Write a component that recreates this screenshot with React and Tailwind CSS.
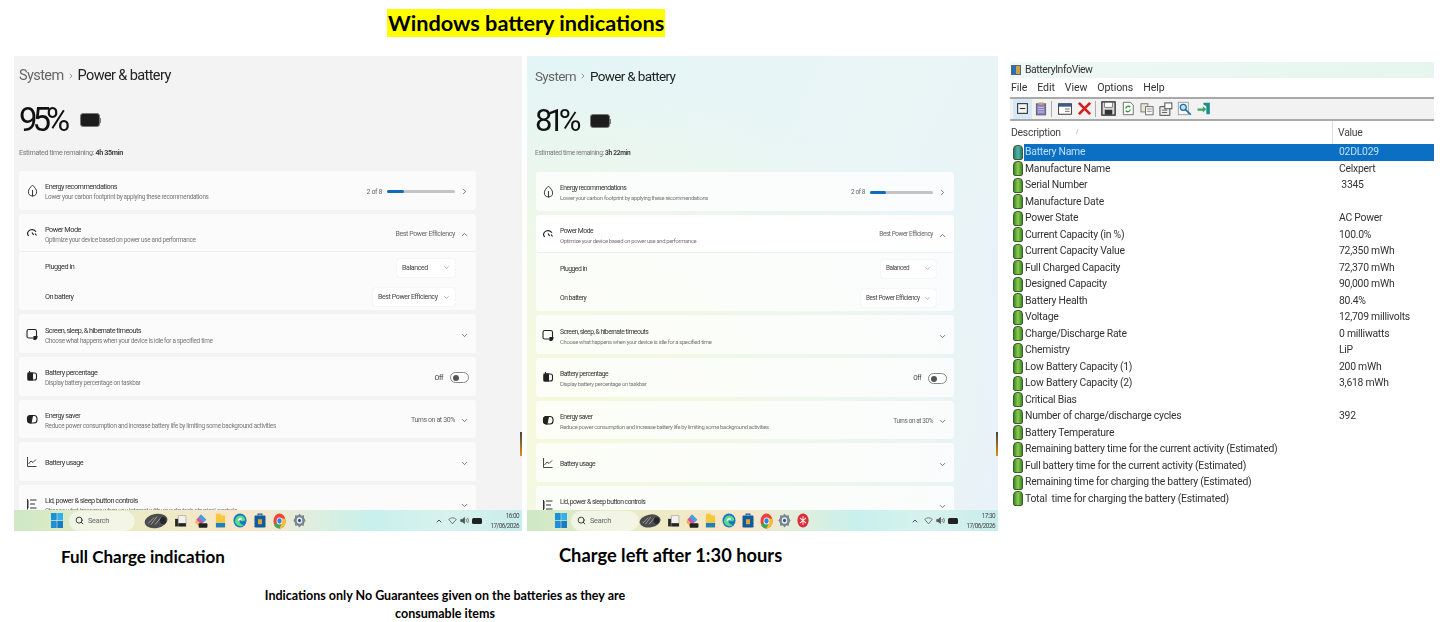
import { ChevronDown, ChevronRight, ChevronUp, Search } from "lucide-react";

const themes = {
  full: {
    panel: "w-[508px] bg-[#f3f3f3]",
    pad: "pl-[5px]",
    list: "w-[457px]",
    card: "bg-[#fbfbfb]",
    crumbs: "text-[14.5px] tracking-[-0.6px] translate-y-[1px]",
    big: "text-[33px] tracking-[-5px]",
    bigGap: "gap-[15px]",
    est: "text-[7.2px] tracking-[-0.35px]",
    slot: "w-[26px]",
    title: "text-[7.3px] tracking-[-0.5px]",
    sub: "text-[6.4px] tracking-[-0.32px]",
    side: "text-[7px] tracking-[-0.38px]",
    bar: "w-[68px]",
    barFill: "w-[17px]",
    taskLeft: "pl-[37px]",
    search: "w-[66px] ml-[6px]",
    rock: "ml-[9px] w-[24px]",
  },
  left: {
    panel: "w-[471px] bg-[radial-gradient(ellipse_at_0%_75%,#f7f9dc_0%,#eff8e8_35%,transparent_70%),linear-gradient(115deg,#e3f5f6_0%,#eaf5f6_55%,#e8f2f8_100%)]",
    pad: "pl-[8px]",
    list: "w-[418px] ml-[1px]",
    card: "bg-white/75",
    crumbs: "text-[13.5px] tracking-[-0.65px]",
    big: "text-[31px] tracking-[-5.5px]",
    bigGap: "gap-[14px]",
    est: "text-[6.6px] tracking-[-0.32px]",
    slot: "w-[24px]",
    title: "text-[6.8px] tracking-[-0.5px]",
    sub: "text-[5.9px] tracking-[-0.34px]",
    side: "text-[6.4px] tracking-[-0.38px]",
    bar: "w-[63px]",
    barFill: "w-[16px]",
    taskLeft: "pl-[28px]",
    search: "w-[68px] ml-[4px]",
    rock: "w-[22px]",
  },
};

function LeafIcon() {
  return (
    <svg viewBox="0 0 12 12" className="w-[13px] h-[13px] text-[#333]" fill="none" stroke="currentColor" strokeWidth="0.9">
      <path d="M6 1 C8 3 9.8 5 9.8 7.2 A3.8 3.8 0 0 1 2.2 7.2 C2.2 5 4 3 6 1Z" />
      <path d="M6 5.5 V11.5" />
    </svg>
  );
}

function GaugeIcon() {
  return (
    <svg viewBox="0 0 12 12" className="w-[12px] h-[12px] text-[#222]" fill="none" stroke="currentColor" strokeWidth="1.2">
      <path d="M1.5 7 A4.6 4.6 0 0 1 10 4.8" />
      <path d="M2.6 9 L1.5 7 M9 6.5 L10.5 8.5" />
      <path d="M6 5.5 L7.6 8" />
    </svg>
  );
}

function ScreenIcon() {
  return (
    <svg viewBox="0 0 12 12" className="w-[12px] h-[12px] text-[#222]" fill="none" stroke="currentColor" strokeWidth="1.1">
      <rect x="1" y="1.5" width="9.5" height="8.5" rx="1.8" />
      <path d="M8 11.5 A3 3 0 0 0 11 8.5 L8 8.5Z" fill="currentColor" />
    </svg>
  );
}

function PercentIcon() {
  return (
    <svg viewBox="0 0 12 12" className="w-[12px] h-[12px] text-[#222]" fill="none" stroke="currentColor" strokeWidth="1.1">
      <rect x="2" y="3" width="8.5" height="7" rx="2" />
      <path d="M2 3 H6.5 V10 H2Z" fill="currentColor" />
      <path d="M3.5 1 V3" />
    </svg>
  );
}

function SaverIcon() {
  return (
    <svg viewBox="0 0 12 12" className="w-[12px] h-[12px] text-[#222]" fill="none" stroke="currentColor" strokeWidth="1.1">
      <rect x="1.5" y="2.5" width="9.5" height="7.5" rx="3" />
      <path d="M1.5 6 A3.5 3.5 0 0 1 5 2.5 L6.5 2.5 L5 10 A3.5 3.5 0 0 1 1.5 6Z" fill="currentColor" />
    </svg>
  );
}

function ChartIcon() {
  return (
    <svg viewBox="0 0 12 12" className="w-[12px] h-[12px] text-[#333]" fill="none" stroke="currentColor" strokeWidth="0.9">
      <path d="M1.5 1 V10.5 H10.5" />
      <path d="M2.5 8 L5 5 L7 6.5 L10 3.5" />
    </svg>
  );
}

function ListIcon() {
  return (
    <svg viewBox="0 0 12 12" className="w-[12px] h-[12px] text-[#333]" fill="none" stroke="currentColor" strokeWidth="1">
      <path d="M1.5 1 V11.5 M4 2 H10.5 M4 6 H9 M4 10 H10.5" />
      <path d="M1 3 H3 M1 5 H3 M1 7 H3 M1 9 H3" />
    </svg>
  );
}

function Chevron({ up }) {
  const Icon = up ? ChevronUp : ChevronDown;
  return <Icon className="w-[9px] h-[9px] text-[#555]" strokeWidth={2} />;
}

function BigBattery() {
  return (
    <div className="flex items-center">
      <div className="w-[20px] h-[14px] rounded-[3px] border-[1.5px] border-[#777] bg-[#1d1d1d]" />
      <div className="w-[1px] h-[5px] bg-[#777]" />
    </div>
  );
}

function Card({ t, icon, title, sub, right, className = "" }) {
  return (
    <div className={`flex items-center h-[38.7px] shrink-0 rounded-[3px] pr-[7px] ${t.card} ${className}`}>
      <div className={`${t.slot} flex justify-center shrink-0`}>{icon}</div>
      <div className={`flex-1 min-w-0 ${sub ? "pt-[4px]" : "pt-[2px]"}`}>
        <div className={`${t.title} leading-[10px] text-[#333]`}>{title}</div>
        {sub && <div className={`${t.sub} leading-[10px] text-[#777]`}>{sub}</div>}
      </div>
      <div className={`flex items-center gap-[5px] pt-[3px] ${t.side} text-[#666]`}>{right}</div>
    </div>
  );
}

function Dropdown({ t, label, width }) {
  return (
    <div className={`flex items-center justify-between whitespace-nowrap h-[18px] ${width} px-[5px] rounded-[2px] bg-white shadow-[0_0_1px_#ccc] ${t.side} text-[#444]`}>
      {label}
      <ChevronDown className="w-[7px] h-[7px] text-[#777]" />
    </div>
  );
}

function SettingsBody({ kind, percent, remaining, topGap }) {
  const t = themes[kind];
  return (
    <div className="h-[454px] overflow-hidden font-['Roboto',sans-serif]">
      <div className={`${t.pad} ${topGap}`}>
        <div className={`flex items-center gap-[3px] ${t.crumbs} leading-[20px]`}>
          <span className="text-[#666]">System</span>
          <ChevronRight className="w-[8px] h-[8px] text-[#666]" />
          <span className="text-[#222]">Power &amp; battery</span>
        </div>
        <div className={`flex items-center ${t.bigGap} mt-[17px] h-[36px]`}>
          <span className={`${t.big} text-[#111]`}>{percent}</span>
          <BigBattery />
        </div>
        <div className={`mt-[10px] ${t.est} leading-[9px] text-[#777]`}>
          Estimated time remaining: <span className="font-semibold text-[#333]">{remaining}</span>
        </div>
        <div className={`mt-[14px] flex flex-col gap-[4px] ${t.list}`}>
          <Card
            t={t}
            icon={<LeafIcon />}
            title="Energy recommendations"
            sub="Lower your carbon footprint by applying these recommendations"
            right={
              <>
                <span>2 of 8</span>
                <div className={`${t.bar} h-[3px] rounded-full bg-[#c4c4c4]`}>
                  <div className={`${t.barFill} h-full rounded-full bg-[#0f6cbd]`} />
                </div>
                <ChevronRight className="w-[9px] h-[9px] text-[#555]" />
              </>
            }
          />
          <div className={`rounded-[3px] ${t.card}`}>
            <Card
              t={t}
              className="bg-transparent border-b border-[#eeeeee]"
              icon={<GaugeIcon />}
              title="Power Mode"
              sub="Optimize your device based on power use and performance"
              right={
                <>
                  Best Power Efficiency
                  <Chevron up />
                </>
              }
            />
            <div className={`flex items-center justify-between h-[29px] pt-[2px] ${kind === "full" ? "pr-[21px]" : "pr-[18px]"}`}>
              <span className={`${t.slot} shrink-0`} />
              <span className={`flex-1 ${t.title} text-[#333]`}>Plugged in</span>
              <Dropdown t={t} label="Balanced" width={kind === "full" ? "w-[58px]" : "w-[55px]"} />
            </div>
            <div className={`flex items-center justify-between h-[29px] pt-[3px] ${kind === "full" ? "pr-[21px]" : "pr-[18px]"}`}>
              <span className={`${t.slot} shrink-0`} />
              <span className={`flex-1 ${t.title} text-[#333]`}>On battery</span>
              <Dropdown t={t} label="Best Power Efficiency" width={kind === "full" ? "w-[82px]" : "w-[75px]"} />
            </div>
          </div>
          <Card
            t={t}
            icon={<ScreenIcon />}
            title="Screen, sleep, & hibernate timeouts"
            sub="Choose what happens when your device is idle for a specified time"
            right={<Chevron />}
          />
          <Card
            t={t}
            icon={<PercentIcon />}
            title="Battery percentage"
            sub="Display battery percentage on taskbar"
            right={
              <>
                <span className="text-[#333]">Off</span>
                <div className="flex items-center w-[19px] h-[11px] ml-[2px] px-[2px] rounded-full border border-[#888] bg-white/60">
                  <div className="w-[6px] h-[6px] rounded-full bg-[#555]" />
                </div>
              </>
            }
          />
          <Card
            t={t}
            icon={<SaverIcon />}
            title="Energy saver"
            sub="Reduce power consumption and increase battery life by limiting some background activities"
            right={
              <>
                Turns on at 30%
                <Chevron />
              </>
            }
          />
          <Card t={t} icon={<ChartIcon />} title="Battery usage" right={<Chevron />} />
          <Card
            t={t}
            icon={<ListIcon />}
            title="Lid, power & sleep button controls"
            sub="Choose what happens when you interact with your device's physical controls"
            right={<Chevron />}
          />
        </div>
      </div>
    </div>
  );
}

function WinLogo() {
  return (
    <svg viewBox="0 0 12 12" className="w-[12px] h-[15px]" preserveAspectRatio="none">
      <path d="M0 0 H5.7 V5.7 H0Z" fill="#1b8fd8" />
      <path d="M6.3 0 H12 V5.7 H6.3Z" fill="#2fb0ea" />
      <path d="M0 6.3 H5.7 V12 H0Z" fill="#1e8fd6" />
      <path d="M6.3 6.3 H12 V12 H6.3Z" fill="#1a7cc8" />
    </svg>
  );
}

function Rock() {
  return (
    <svg viewBox="0 0 24 16" className="w-full h-[17px]">
      <ellipse cx="12" cy="8.5" rx="11.5" ry="7" fill="#4a4c50" transform="rotate(-10 12 8)" />
      <path d="M4 11 L10 5 M7 12 L13 4 M11 12 L17 5" stroke="#a8a08c" strokeWidth="1" />
      <ellipse cx="19" cy="8" rx="3" ry="3.5" fill="#23252a" />
    </svg>
  );
}

const appIcons = [
  <svg key="a" viewBox="0 0 12 12" className="w-[13px] h-[14px]">
    <path d="M1 4 H4 V11 H1Z" fill="#2b2b2b" />
    <path d="M4 1 H11 V11 H4Z" fill="#f1f1ef" stroke="#777" strokeWidth="0.4" />
    <path d="M4 8 H11 V11 H4Z" fill="#222" />
  </svg>,
  <svg key="b" viewBox="0 0 12 12" className="w-[14px] h-[16px]">
    <path d="M6 0.5 L10.5 5 L6 9 L2 5Z" fill="#d64bb0" />
    <path d="M6 0.5 L10.5 5 L8 7 L4 2.5Z" fill="#37a9dd" />
    <path d="M2 5 L6 9 L4 10 L1 7Z" fill="#f2b33c" />
    <rect x="4" y="8" width="7.5" height="3.8" rx="0.8" fill="#222" />
  </svg>,
  <svg key="c" viewBox="0 0 12 12" className="w-[11px] h-[15px]" preserveAspectRatio="none">
    <path d="M1 0.5 H6 L7 2 H11 V11.5 H1Z" fill="#f7c83c" />
    <path d="M1 8 H11 V11.5 H1Z" fill="#1a82c8" />
  </svg>,
  <svg key="d" viewBox="0 0 12 12" className="w-[14px] h-[15px]" preserveAspectRatio="none">
    <circle cx="6" cy="6" r="5.6" fill="#1479c4" />
    <path d="M2 8 A4.5 4.5 0 0 1 10.5 5 C10.5 7 7 7 6 6 C5 7.5 7 10 9.5 9.5 A5 5 0 0 1 2 8Z" fill="#5fd88a" />
    <path d="M4.5 7 A2 2 0 0 1 8 5 L5.5 5.5Z" fill="#f4f8fb" />
  </svg>,
  <svg key="e" viewBox="0 0 12 12" className="w-[12px] h-[15px]" preserveAspectRatio="none">
    <rect x="0.5" y="2" width="11" height="9.5" rx="1" fill="#125a9c" />
    <path d="M4 2 V0.8 H8 V2" fill="none" stroke="#125a9c" />
    <rect x="4" y="5" width="4" height="4" fill="#d9a83a" />
  </svg>,
  <svg key="f" viewBox="0 0 12 12" className="w-[13px] h-[16px]" preserveAspectRatio="none">
    <circle cx="6" cy="6" r="5.6" fill="#e8453c" />
    <path d="M6 6 L1 9 A5.6 5.6 0 0 0 6 11.6 L9 6Z" fill="#3aa757" />
    <path d="M6 6 L9 6 L6 11.6 A5.6 5.6 0 0 0 11.4 4.5 L6 3.5Z" fill="#fbc02d" />
    <circle cx="6" cy="6" r="2.7" fill="#fff" />
    <circle cx="6" cy="6" r="2" fill="#2f80e8" />
  </svg>,
  <svg key="g" viewBox="0 0 12 12" className="w-[13px] h-[15px]" preserveAspectRatio="none">
    <path d="M6 0.5 L7.5 2 L10 1.8 L10.2 4 L11.6 6 L10.2 8 L10 10.2 L7.5 10 L6 11.5 L4.5 10 L2 10.2 L1.8 8 L0.4 6 L1.8 4 L2 1.8 L4.5 2Z" fill="#7a8590" />
    <circle cx="6" cy="6" r="2.6" fill="#e8eef0" />
    <circle cx="6" cy="6" r="1.4" fill="#2a5a90" />
  </svg>,
];

function Taskbar({ kind, time }) {
  const t = themes[kind];
  const slots = kind === "full" ? "w-[19.8px]" : "w-[18.6px]";
  return (
    <div className={`flex items-center h-[21px] ${t.taskLeft} pr-[3px] font-['Roboto',sans-serif] bg-[linear-gradient(90deg,#cfe8c5_0%,#e8ecc5_20%,#f9e6c8_45%,#dcefe0_60%,#c8f0ec_70%,#d8f2ee_85%,#c8ecec_100%)]`}>
      <WinLogo />
      <div className={`flex items-center gap-[4px] h-[20px] pl-[6px] rounded-full bg-[#f5f7ec]/80 text-[7.4px] tracking-[-0.3px] text-[#666] ${t.search}`}>
        <Search className="w-[9px] h-[9px] text-[#333]" strokeWidth={2.5} />
        Search
      </div>
      <div className={t.rock}>
        <Rock />
      </div>
      <div className="flex items-center ml-[3px]">
        {appIcons.map((icon, i) => (
          <div key={i} className={`${slots} flex justify-center`}>
            {icon}
          </div>
        ))}
        {kind === "left" && (
          <div className={`${slots} flex justify-center`}>
            <svg viewBox="0 0 12 12" className="w-[12px] h-[15px]" preserveAspectRatio="none">
              <circle cx="6" cy="6" r="5.6" fill="#dd2c3a" />
              <path d="M6 2.5 V9.5 M3 4 L9 8 M9 4 L3 8" stroke="#f5e8e8" strokeWidth="1" />
            </svg>
          </div>
        )}
      </div>
      <div className="flex-1" />
      <div className="flex items-center gap-[3px] mr-[8px]">
        <ChevronUp className="w-[8px] h-[8px] text-[#333]" strokeWidth={2.5} />
        <svg viewBox="0 0 12 12" className="w-[9px] h-[9px] ml-[2px] text-[#555]" fill="none" stroke="currentColor">
          <path d="M1 4.5 A7 7 0 0 1 11 4.5 L6 10.5Z" />
        </svg>
        <svg viewBox="0 0 12 12" className="w-[9px] h-[9px] text-[#555]" fill="none" stroke="currentColor">
          <path d="M1 4.5 H3 L6 2 V10 L3 7.5 H1Z" fill="currentColor" />
          <path d="M8 4 Q9.5 6 8 8 M10 2.5 Q12.5 6 10 9.5" />
        </svg>
        <div className="w-[10px] h-[6px] rounded-[1.5px] bg-[#222]" />
      </div>
      <div className="text-right text-[6.4px] tracking-[-0.55px] leading-[10px] text-[#444]">
        <div>{time}</div>
        <div>17/06/2026</div>
      </div>
    </div>
  );
}

function SettingsPanel({ kind, percent, remaining, time, topGap }) {
  const t = themes[kind];
  return (
    <div className={`relative h-[475px] shrink-0 blur-[0.3px] ${t.panel}`}>
      <SettingsBody kind={kind} percent={percent} remaining={remaining} topGap={topGap} />
      <Taskbar kind={kind} time={time} />
      <div className="absolute right-0 top-[376px] w-[2px] h-[24px] bg-[linear-gradient(180deg,#444,#e0901a)]" />
    </div>
  );
}

function BatteryCell({ selected }) {
  return (
    <div className={`w-[10px] h-[15px] rounded-t-[4px] rounded-b-[2px] border border-[#3f5c30] shrink-0 ${selected ? "bg-[linear-gradient(90deg,#1f7f78,#57b3a4,#1f7f78)]" : "bg-[linear-gradient(90deg,#3a8a24,#8ccb50,#3a8a24)]"}`} />
  );
}

const rows = [
  ["Battery Name", "02DL029"],
  ["Manufacture Name", "Celxpert"],
  ["Serial Number", "\u00a03345"],
  ["Manufacture Date", ""],
  ["Power State", "AC Power"],
  ["Current Capacity (in %)", "100.0%"],
  ["Current Capacity Value", "72,350 mWh"],
  ["Full Charged Capacity", "72,370 mWh"],
  ["Designed Capacity", "90,000 mWh"],
  ["Battery Health", "80.4%"],
  ["Voltage", "12,709 millivolts"],
  ["Charge/Discharge Rate", "0 milliwatts"],
  ["Chemistry", "LiP"],
  ["Low Battery Capacity (1)", "200 mWh"],
  ["Low Battery Capacity (2)", "3,618 mWh"],
  ["Critical Bias", ""],
  ["Number of charge/discharge cycles", "392"],
  ["Battery Temperature", ""],
  ["Remaining battery time for the current activity (Estimated)", ""],
  ["Full battery time for the current activity (Estimated)", ""],
  ["Remaining time for charging the battery (Estimated)", ""],
  ["Total\u00a0 time for charging the battery (Estimated)", ""],
];

const toolIcons = [
  <svg key="1" viewBox="0 0 12 12" className="w-[13px] h-[13px]"><rect x="1.5" y="1.5" width="9" height="9" fill="#f4f4f4" stroke="#333" /><path d="M3.5 6 H8.5" stroke="#333" /></svg>,
  <svg key="2" viewBox="0 0 12 12" className="w-[14px] h-[15px]"><rect x="2" y="2" width="8" height="9.5" fill="#8a80c4" stroke="#554" strokeWidth="0.7" /><rect x="4" y="0.8" width="4" height="2" fill="#c9a36a" /><path d="M3.5 5 H8.5 M3.5 7 H8.5 M3.5 9 H8.5" stroke="#d8d4ee" strokeWidth="0.7" /></svg>,
  <svg key="3" viewBox="0 0 12 12" className="w-[16px] h-[14px]"><rect x="0.5" y="1.5" width="11" height="9" fill="#fff" stroke="#333" strokeWidth="0.8" /><rect x="0.5" y="1.5" width="11" height="2.5" fill="#3d5a8c" /><path d="M6 6 H10 M6 8 H10" stroke="#555" strokeWidth="0.7" /></svg>,
  <svg key="4" viewBox="0 0 12 12" className="w-[15px] h-[15px]"><path d="M1.5 1.5 L10.5 10.5 M10.5 1.5 L1.5 10.5" stroke="#d42020" strokeWidth="2.2" /></svg>,
  <svg key="5" viewBox="0 0 12 12" className="w-[15px] h-[15px]"><rect x="0.7" y="0.7" width="10.6" height="10.6" fill="#d8d8d8" stroke="#222" /><rect x="3" y="1" width="6" height="4" fill="#fff" stroke="#444" strokeWidth="0.5" /><rect x="3" y="7" width="6" height="4" fill="#333" /></svg>,
  <svg key="6" viewBox="0 0 12 12" className="w-[14px] h-[15px]"><path d="M2 0.7 H8 L10.5 3 V11.3 H2Z" fill="#fff" stroke="#555" strokeWidth="0.7" /><path d="M4 6 A2.4 2.4 0 0 1 8 4.8 M8 7 A2.4 2.4 0 0 1 4 8" stroke="#2e9a3c" strokeWidth="1.2" fill="none" /></svg>,
  <svg key="7" viewBox="0 0 12 12" className="w-[14px] h-[14px]"><rect x="0.8" y="1.5" width="6" height="7" fill="#e8e4d0" stroke="#666" strokeWidth="0.7" /><rect x="4.8" y="4" width="6.4" height="7" fill="#f7f7f7" stroke="#555" strokeWidth="0.7" /><path d="M6 6 H10 M6 8 H10" stroke="#666" strokeWidth="0.6" /></svg>,
  <svg key="8" viewBox="0 0 12 12" className="w-[14px] h-[14px]"><rect x="0.8" y="4" width="8.5" height="7.4" fill="#eee" stroke="#444" strokeWidth="0.8" /><rect x="5" y="0.8" width="6" height="5" fill="#fff" stroke="#444" strokeWidth="0.8" /><path d="M2.5 7 H7 M2.5 9 H7" stroke="#444" strokeWidth="0.7" /></svg>,
  <svg key="9" viewBox="0 0 12 12" className="w-[15px] h-[15px]"><rect x="1" y="1" width="8" height="10" fill="#f6f6f6" stroke="#888" strokeWidth="0.6" /><circle cx="5" cy="5" r="2.4" fill="#bfe3f5" stroke="#1c6fa8" /><path d="M6.8 6.8 L11 11" stroke="#1c6fa8" strokeWidth="1.4" /></svg>,
  <svg key="10" viewBox="0 0 12 12" className="w-[14px] h-[15px]"><path d="M5.5 1 H11 V11 H8 V4 L5.5 2.5Z" fill="#1f8c8c" /><path d="M0.5 6 H5 V4 L8 6.7 L5 9.5 V8 H0.5Z" fill="#34a86a" /></svg>,
];

function BatteryInfoView() {
  return (
    <div className="w-[424px] ml-[12px] mt-[6px] shrink-0 blur-[0.3px] font-['Roboto',sans-serif] text-[#333]">
      <div className="flex items-center gap-[4px] h-[16px] pl-[1px] bg-[linear-gradient(90deg,#eef8f6,#e6f6ee)] text-[10.4px] tracking-[-0.4px]">
        <div className="flex w-[10px] h-[10px] border border-[#567] bg-[#c8a24a]">
          <div className="w-1/2 bg-[#2a6fb0]" />
        </div>
        BatteryInfoView
      </div>
      <div className="flex items-center gap-[10px] h-[19px] pl-[1px] text-[10.6px] tracking-[-0.1px]">
        <span>File</span>
        <span>Edit</span>
        <span>View</span>
        <span>Options</span>
        <span>Help</span>
      </div>
      <div className="flex items-center h-[24px] pl-[3px] pb-[1px] border-y-2 border-[#a9a9a9] bg-[#f2f2f2]">
        <div className="flex items-center justify-center w-[19px] h-[20px] bg-[#d6e8f6]">{toolIcons[0]}</div>
        <div className="w-[17px] flex justify-center">{toolIcons[1]}</div>
        <div className="w-px h-[16px] mx-[2px] bg-[#aaa]" />
        <div className="w-[22px] flex justify-center">{toolIcons[2]}</div>
        <div className="w-[16px] flex justify-center">{toolIcons[3]}</div>
        <div className="w-px h-[16px] mx-[3px] bg-[#aaa]" />
        {toolIcons.slice(4).map((icon, i) => (
          <div key={i} className="w-[19px] flex justify-center">
            {icon}
          </div>
        ))}
      </div>
      <div className="flex h-[23px] items-center text-[10.4px] tracking-[-0.25px] text-[#444]">
        <div className="flex items-center gap-[15px] w-[323px] h-full pl-[1px] border-r border-[#dddddd]">
          Description
          <span className="text-[7px] text-[#aaa]">/</span>
        </div>
        <div className="pl-[5px]">Value</div>
      </div>
      <div>
        {rows.map(([label, value], i) => (
          <div key={label} className="flex items-center h-[16.5px] pl-[3px] text-[10.4px] tracking-[-0.25px] whitespace-nowrap">
            <BatteryCell selected={i === 0} />
            <div className={`flex flex-1 items-center h-full ml-[1px] ${i === 0 ? "bg-[#0b6fc4] text-[#bfe0f8]" : ""}`}>
              <div className="w-[314px] pl-[1px]">{label}</div>
              <div className="pl-[1px]">{value}</div>
            </div>
          </div>
        ))}
      </div>
    </div>
  );
}

export default function App() {
  return (
    <div className="w-[1445px] h-[622px] overflow-hidden bg-white font-['Open_Sans',sans-serif]">
      <div className="flex h-[56px] pt-[9px] pl-[387px] items-start">
        <span className="px-[1px] bg-[#ffff00] font-['Lato',sans-serif] font-bold text-[21.7px] leading-[28px] text-black">
          Windows battery indications
        </span>
      </div>
      <div className="flex items-start pl-[14px]">
        <SettingsPanel kind="full" percent="95%" remaining="4h 35min" time="16:00" topGap="pt-[9px]" />
        <div className="w-[5px] shrink-0" />
        <SettingsPanel kind="left" percent="81%" remaining="3h 22min" time="17:30" topGap="pt-[10px]" />
        <BatteryInfoView />
      </div>
      <div className="flex font-['Lato',sans-serif] font-bold text-black">
        <div className="w-[559px] pl-[61px] pt-[14px] text-[17px] leading-[24px]">Full Charge indication</div>
        <div className="pt-[12px] text-[18.3px] leading-[24px]">Charge left after 1:30 hours</div>
      </div>
      <div className="w-[390px] ml-[250px] mt-[18px] text-center font-['Lato',sans-serif] font-bold text-[12.5px] leading-[18px] text-black">
        Indications only No Guarantees given on the batteries as they are consumable items
      </div>
    </div>
  );
}
